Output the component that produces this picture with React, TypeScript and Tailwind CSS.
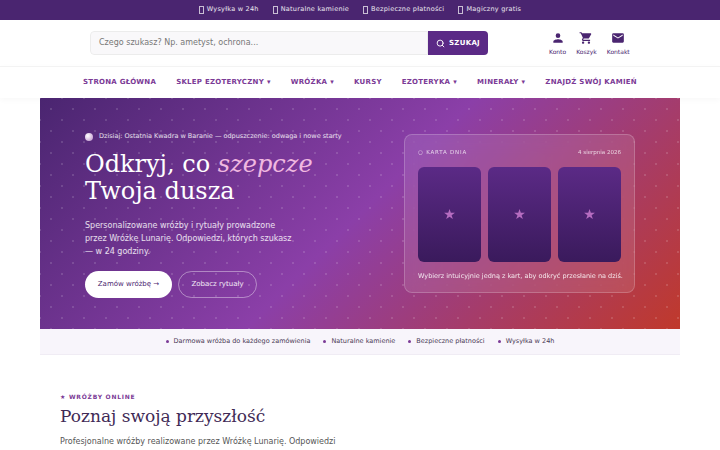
import { Search } from "lucide-react";

const sans = "font-['DejaVu_Sans',sans-serif]";

function Tofu() {
  return <span className="inline-block h-[8px] w-[5px] border border-white/70" />;
}

function Account() {
  return (
    <svg viewBox="0 0 24 24" className="h-[14px] w-[14px] fill-[#4a2570]">
      <path d="M12 12a4 4 0 1 0 0-8 4 4 0 0 0 0 8zm0 2c-2.7 0-8 1.3-8 4v2h16v-2c0-2.7-5.3-4-8-4z" />
    </svg>
  );
}

function Cart() {
  return (
    <svg viewBox="0 0 24 24" className="h-[14px] w-[14px] fill-[#4a2570]">
      <path d="M7 18c-1.1 0-1.99.9-1.99 2S5.9 22 7 22s2-.9 2-2-.9-2-2-2zM1 2v2h2l3.6 7.59-1.35 2.45c-.16.28-.25.61-.25.96 0 1.1.9 2 2 2h12v-2H7.42c-.14 0-.25-.11-.25-.25l.03-.12.9-1.63h7.45c.75 0 1.41-.41 1.75-1.03l3.58-6.47c.08-.14.12-.31.12-.48 0-.55-.45-1-1-1H5.21l-.94-2H1zm16 16c-1.1 0-1.99.9-1.99 2s.89 2 1.99 2 2-.9 2-2-.9-2-2-2z" />
    </svg>
  );
}

function Mail() {
  return (
    <svg viewBox="0 0 24 24" className="h-[14px] w-[14px] fill-[#4a2570]">
      <path d="M20 4H4a2 2 0 0 0-2 2v12c0 1.1.9 2 2 2h16a2 2 0 0 0 2-2V6a2 2 0 0 0-2-2zm0 4-8 5-8-5V6l8 5 8-5v2z" />
    </svg>
  );
}

function TarotCard() {
  return (
    <div className="flex h-[95px] w-[63px] items-center justify-center rounded-[6px] bg-gradient-to-b from-[#5b2a86] to-[#3a1a5c] text-[14px] text-[#b56cc0]">
      ★
    </div>
  );
}

const topItems = ["Wysyłka w 24h", "Naturalne kamienie", "Bezpieczne płatności", "Magiczny gratis"];
const navItems = [
  ["STRONA GŁÓWNA", false],
  ["SKLEP EZOTERYCZNY", true],
  ["WRÓŻKA", true],
  ["KURSY", false],
  ["EZOTERYKA", true],
  ["MINERAŁY", true],
  ["ZNAJDŹ SWÓJ KAMIEŃ", false],
] as const;
const stripItems = ["Darmowa wróżba do każdego zamówienia", "Naturalne kamienie", "Bezpieczne płatności", "Wysyłka w 24h"];

export default function App() {
  return (
    <div className={`${sans} h-[450px] w-[720px] overflow-hidden bg-white`}>
      <div className="flex h-[20px] items-center justify-center gap-[14px] bg-[#4a2570] text-[6.5px] text-white/90">
        {topItems.map((t) => (
          <span key={t} className="flex items-center gap-[3px] tracking-[0.25px]">
            <Tofu />
            {t}
          </span>
        ))}
      </div>

      <header className="flex h-[46px] items-center gap-[61px] pl-[90px]">
        <div className="flex h-[24px] w-[398px] overflow-hidden rounded-[4px]">
          <div className="flex flex-1 items-center rounded-l-[4px] border border-[#ececec] bg-[#f9f8fa] pl-2 text-[8px] text-[#777]">
            Czego szukasz? Np. ametyst, ochrona...
          </div>
          <div className="flex w-[60px] items-center justify-center gap-1 bg-[#5b2a86] text-[7px] font-bold tracking-[0.3px] text-white">
            <Search size={9} strokeWidth={2.5} />
            SZUKAJ
          </div>
        </div>
        <div className="flex gap-[10px] text-[6px] text-[#4a2570]">
          <div className="flex flex-col items-center gap-[2px]">
            <Account />
            Konto
          </div>
          <div className="flex flex-col items-center gap-[2px]">
            <Cart />
            Koszyk
          </div>
          <div className="flex flex-col items-center gap-[2px]">
            <Mail />
            Kontakt
          </div>
        </div>
      </header>

      <nav className="flex h-[32px] items-center justify-center gap-[20px] border-t border-[#f3f3f3] text-[7px] font-bold tracking-[0.25px] text-[#7b3a96] shadow-[0_2px_6px_rgba(0,0,0,0.03)]">
        {navItems.map(([label, caret]) => (
          <span key={label}>
            {label}
            {caret && <span className="ml-[3px]">▾</span>}
          </span>
        ))}
      </nav>

      <section className="relative mx-10 flex h-[231px] items-start justify-between overflow-hidden bg-[linear-gradient(135deg,#4a2570_0%,#8b3fa8_50%,#c0392b_100%)] pl-[45px] pr-[45px]">
        <div className="absolute inset-0 bg-[radial-gradient(circle,rgba(255,255,255,0.14)_0.7px,transparent_1px),radial-gradient(circle,rgba(255,255,255,0.14)_0.7px,transparent_1px)] bg-[length:22px_22px] bg-[position:0_0,11px_11px]" />
        <div className="relative mt-[34px] w-[270px] shrink-0 text-white">
          <div className="flex items-center gap-[6px] whitespace-nowrap text-[6.5px] text-white/85">
            <span className="h-[8px] w-[8px] shrink-0 rounded-full bg-[radial-gradient(circle_at_35%_35%,#fff,#b98ac8)]" />
            Dzisiaj: Ostatnia Kwadra w Baranie — odpuszczenie: odwaga i nowe starty
          </div>
          <h1 className="mt-[9px] whitespace-nowrap font-['DejaVu_Serif',serif] text-[24px] font-normal leading-[27px]">
            Odkryj, co <em className="text-[#f0b8e0]">szepcze</em>
            <br />
            Twoja dusza
          </h1>
          <p className="mt-[14px] w-[209px] text-[8px] leading-[13px] text-white/85">
            Spersonalizowane wróżby i rytuały prowadzone przez Wróżkę Lunarię. Odpowiedzi, których szukasz — w 24 godziny.
          </p>
          <div className="mt-[13px] flex gap-[6px] text-[7px]">
            <span className="flex h-[27px] w-[87px] items-center justify-center rounded-full bg-white font-medium text-[#4a2570]">
              Zamów wróżbę →
            </span>
            <span className="flex h-[27px] w-[79px] items-center justify-center rounded-full border border-white/40 text-white/90">
              Zobacz rytuały
            </span>
          </div>
        </div>

        <div className="relative mt-[36px] h-[159px] w-[231px] shrink-0 rounded-[8px] border border-white/20 bg-white/10 px-[13px] pt-[13px] backdrop-blur-sm">
          <div className="mb-[11px] flex justify-between text-[5.5px] text-white/75">
            <span className="tracking-[0.8px]">○ KARTA DNIA</span>
            <span>4 sierpnia 2026</span>
          </div>
          <div className="flex justify-between">
            <TarotCard />
            <TarotCard />
            <TarotCard />
          </div>
          <p className="mt-[10px] whitespace-nowrap text-center text-[6.5px] text-white/85">
            Wybierz intuicyjnie jedną z kart, aby odkryć przesłanie na dziś.
          </p>
        </div>
      </section>

      <div className="mx-10 flex h-[26px] items-center justify-center gap-[13px] border-b border-[#f0ecf4] bg-[#f8f5fb] text-[6.5px] text-[#4a3a55]">
        {stripItems.map((t) => (
          <span key={t} className="flex items-center gap-[5px]">
            <span className="h-[3px] w-[3px] rounded-full bg-[#7b3a96]" />
            {t}
          </span>
        ))}
      </div>

      <div className="px-[60px] pt-[37px]">
        <div className="text-[6px] font-bold tracking-[0.75px] text-[#7b3a96]">★ WRÓŻBY ONLINE</div>
        <h2 className="mt-[2px] font-['DejaVu_Serif',serif] text-[17px] font-normal leading-[26px] text-[#3f2a56]">
          Poznaj swoją przyszłość
        </h2>
        <p className="mt-[7px] text-[8px] text-[#555]">Profesjonalne wróżby realizowane przez Wróżkę Lunarię. Odpowiedzi</p>
      </div>
    </div>
  );
}
